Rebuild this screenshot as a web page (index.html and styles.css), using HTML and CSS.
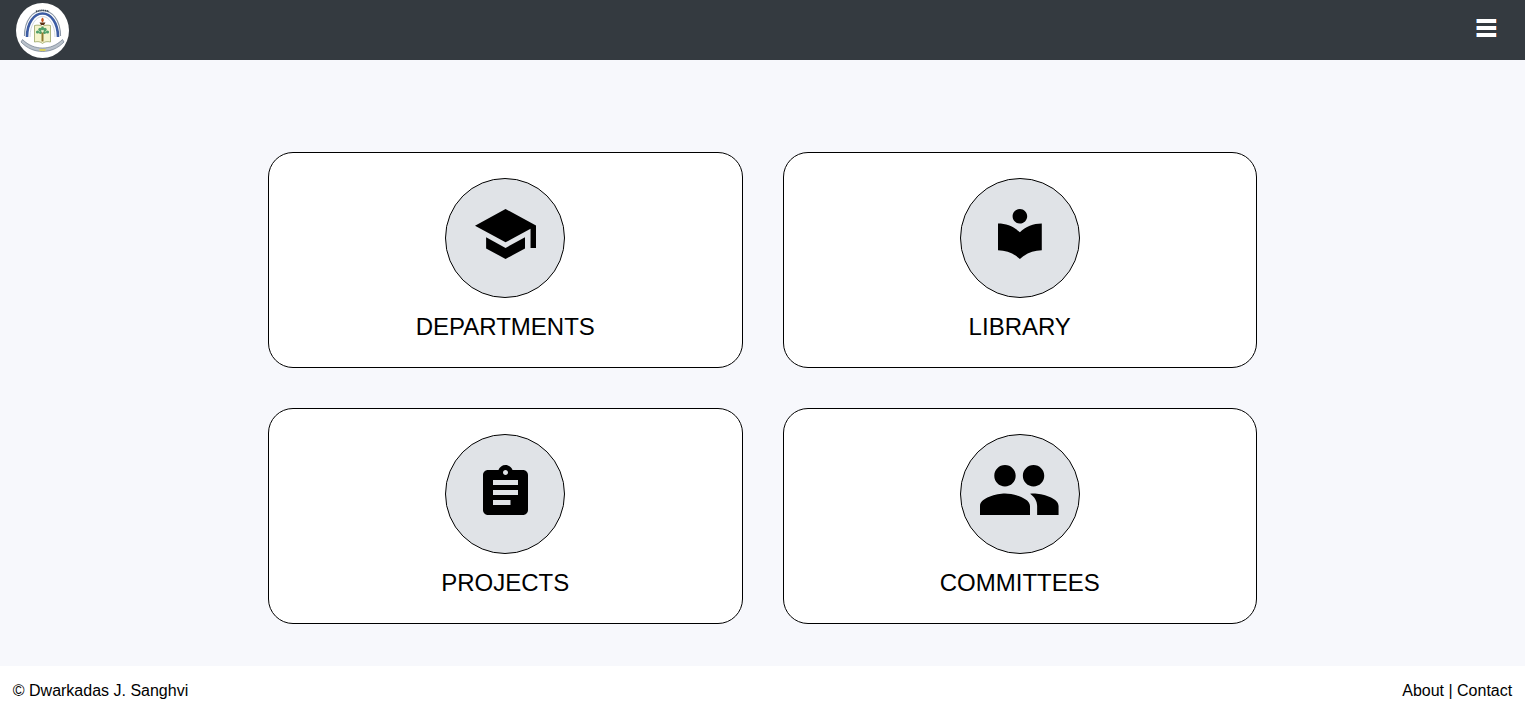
FILE: index.html
```html
<!DOCTYPE html>
<html lang="en">
<head>
    <meta charset="UTF-8">
    <meta name="viewport" content="width=device-width, initial-scale=1.0">
    <title>Dashboard</title>
    <link rel="stylesheet" href="styles.css">
</head>
<body>
    <header class="navbar">
        <a class="logo" href="#">
            <svg class="crest" viewBox="0 0 53 55">
                <ellipse cx="26.500" cy="27.500" rx="26.500" ry="27.500" fill="#fff"/>
                <path d="M8.500 33C8.500 17 17 7.500 26.500 7.500S44.500 17 44.500 33" fill="none" stroke="#8b97a6" stroke-width="1.200"/>
                <path d="M20 8.500c4-1.500 9-1.500 13 0" fill="none" stroke="#33404f" stroke-width="1.600" stroke-dasharray="1.200 .6"/>
                <path d="M11 34C11 20 18 10.500 26.500 10.500S42 20 42 34" fill="none" stroke="#3c5ca3" stroke-width="2.600"/>
                <path d="M14 34C14 22 20 13.500 26.500 13.500S39 22 39 34" fill="none" stroke="#cfd6de" stroke-width="1"/>
                <path d="M18.500 22.500c3.500-.8 6-.3 8 1 2-1.300 4.500-1.800 8-1v16.500c-3.500-.8-6-.3-8 1.500-2-1.800-4.500-2.300-8-1.500z" fill="#f5f4cc" stroke="#8d9a55" stroke-width=".7"/>
                <path d="M23.500 19.500h6l-1.500 2.500h-3z" fill="#5b3216"/>
                <path d="M26.500 14.500c1.800 1.600 1.800 3.400 0 5-1.800-1.600-1.800-3.400 0-5z" fill="#c9541e"/>
                <g fill="#4f9f6a">
                    <circle cx="21.500" cy="29" r="1.600"/>
                    <circle cx="24" cy="26.500" r="1.700"/>
                    <circle cx="26.500" cy="25.500" r="1.700"/>
                    <circle cx="29" cy="26.500" r="1.700"/>
                    <circle cx="31.500" cy="29" r="1.600"/>
                    <circle cx="24.500" cy="29.500" r="1.500"/>
                    <circle cx="28.500" cy="29.500" r="1.500"/>
                </g>
                <rect x="25.500" y="29.500" width="2" height="9" fill="#8f7a2e"/>
                <path d="M6.500 36.500c6 6 13 8.500 20 8.500s14-2.500 20-8.500l1.500 2.500c-6 6.500-14 9.500-21.500 9.500S11 45.500 5 39z" fill="#b9c1ca" stroke="#5c6b7d" stroke-width=".6"/>
                <rect x="23.500" y="46" width="6" height="2" fill="#d9cf58"/>
            </svg>
        </a>
        <button class="menu-btn" aria-label="Menu">
            <span></span>
            <span></span>
            <span></span>
        </button>
    </header>

    <main class="content">
        <div class="card-grid">
            <a class="card" href="#">
                <div class="icon-circle">
                    <svg class="icon" viewBox="1 3 22 18"><path d="M5 13.180v4L12 21l7-3.820v-4L12 17l-7-3.820zM12 3L1 9l11 6 9-4.910V17h2V9L12 3z"/></svg>
                </div>
                <div class="card-title">DEPARTMENTS</div>
            </a>
            <a class="card" href="#">
                <div class="icon-circle">
                    <svg class="icon" viewBox="3 2 18 20.550"><path d="M12 11.550C9.640 9.350 6.480 8 3 8v11c3.480 0 6.640 1.350 9 3.550 2.360-2.190 5.520-3.550 9-3.550V8c-3.480 0-6.640 1.350-9 3.550zM12 8c1.660 0 3-1.340 3-3s-1.340-3-3-3-3 1.340-3 3 1.340 3 3 3z"/></svg>
                </div>
                <div class="card-title">LIBRARY</div>
            </a>
            <a class="card" href="#">
                <div class="icon-circle">
                    <svg class="icon" viewBox="3 1 18 20"><path d="M19 3h-4.180C14.400 1.840 13.300 1 12 1c-1.300 0-2.400.84-2.820 2H5c-1.100 0-2 .9-2 2v14c0 1.100.9 2 2 2h14c1.100 0 2-.9 2-2V5c0-1.100-.9-2-2-2zm-7 0c.55 0 1 .45 1 1s-.45 1-1 1-1-.45-1-1 .45-1 1-1zm2 14H7v-2h7v2zm3-4H7v-2h10v2zm0-4H7V7h10v2z"/></svg>
                </div>
                <div class="card-title">PROJECTS</div>
            </a>
            <a class="card" href="#">
                <div class="icon-circle">
                    <svg class="icon" viewBox="1 5 22 14"><path d="M16 11c1.660 0 2.990-1.340 2.990-3S17.660 5 16 5c-1.660 0-3 1.340-3 3s1.340 3 3 3zm-8 0c1.660 0 2.990-1.340 2.990-3S9.660 5 8 5C6.340 5 5 6.340 5 8s1.340 3 3 3zm0 2c-2.330 0-7 1.170-7 3.500V19h14v-2.500c0-2.330-4.670-3.500-7-3.500zm8 0c-.29 0-.62.02-.97.05 1.160.84 1.970 1.970 1.970 3.450V19h6v-2.500c0-2.330-4.670-3.500-7-3.500z"/></svg>
                </div>
                <div class="card-title">COMMITTEES</div>
            </a>
        </div>
    </main>

    <footer class="footer">
        <span>&copy; Dwarkadas J. Sanghvi</span>
        <span><a href="#">About</a> | <a href="#">Contact</a></span>
    </footer>
</body>
</html>
```

FILE: styles.css
```css
* {
    box-sizing: border-box;
}
body {
    margin: 0;
    min-height: 716px;
    display: flex;
    flex-direction: column;
    font-family: "Liberation Sans", Arial, sans-serif;
    background: #f7f8fc;
    color: #000;
}
a {
    color: inherit;
    text-decoration: none;
}
.navbar {
    height: 60px;
    display: flex;
    align-items: center;
    justify-content: space-between;
    padding: 0 28px 0 16px;
    background: #343a40;
}
.logo {
    display: flex;
    margin-top: 1px;
}
.crest {
    width: 53px;
    height: 55px;
    filter: blur(0.3px);
}
.menu-btn {
    width: 21px;
    display: flex;
    flex-direction: column;
    gap: 3px;
    margin-bottom: 4px;
    padding: 0;
    background: none;
    border: none;
    cursor: pointer;
}
.menu-btn span {
    height: 4px;
    background: #fff;
    border-left: 1px solid #5d9ee6;
    border-right: 1px solid #a8623a;
}
.content {
    flex: 1;
    display: flex;
    justify-content: center;
    padding-top: 92px;
}
.card-grid {
    display: grid;
    grid-template-columns: 474.5px 474.5px;
    grid-auto-rows: 216px;
    gap: 40px;
}
.card {
    display: flex;
    flex-direction: column;
    align-items: center;
    padding-top: 25px;
    background: #fff;
    border: 1px solid #000;
    border-radius: 25px;
}
.icon-circle {
    width: 120px;
    height: 120px;
    display: flex;
    justify-content: center;
    padding-top: 30px;
    background: #e0e3e7;
    border: 1px solid #000;
    border-radius: 50%;
}
.icon {
    height: 50px;
}
.card-title {
    margin-top: 15px;
    font-size: 24px;
    line-height: 28px;
}
.footer {
    height: 50px;
    display: flex;
    align-items: center;
    justify-content: space-between;
    padding: 0 12.8px;
    background: #fff;
    font-size: 16px;
}
```
